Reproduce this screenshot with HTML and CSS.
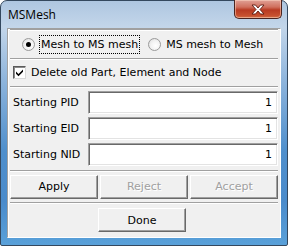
FILE: index.html
```html
<!DOCTYPE html>
<html>
<head>
<meta charset="utf-8">
<link rel="stylesheet" href="styles.css">
</head>
<body>
<div class="window">
  <div class="titlebar">
    <span class="title">MSMesh</span>
    <div class="close">
      <svg width="14" height="11" viewBox="0 0 14 11"><path d="M1 1 H4.5 L7 4 L9.5 1 H13 L9 5.5 L13 10 H9.5 L7 7 L4.5 10 H1 L5 5.5 Z" fill="#fff" stroke="#5a1a10" stroke-width="0.9" stroke-linejoin="round"/></svg>
    </div>
  </div>
  <div class="client">
    <div class="section radios">
      <label class="radio-item">
        <span class="radio checked"></span>
        <span class="focus">Mesh to MS mesh</span>
      </label>
      <label class="radio-item">
        <span class="radio"></span>
        <span class="plain">MS mesh to Mesh</span>
      </label>
    </div>
    <div class="section check-row">
      <span class="checkbox">
        <svg width="9" height="9" viewBox="0 0 9 9"><path d="M1 3.5 L3.5 6 L8 1.5 V3.8 L3.5 8.3 L1 5.8 Z" fill="#000"/></svg>
      </span>
      <span>Delete old Part, Element and Node</span>
    </div>
    <div class="section fields">
      <div class="field"><span class="flabel">Starting PID</span><div class="input">1</div></div>
      <div class="field"><span class="flabel">Starting EID</span><div class="input">1</div></div>
      <div class="field"><span class="flabel">Starting NID</span><div class="input">1</div></div>
    </div>
    <div class="section buttons">
      <div class="btn">Apply</div>
      <div class="btn disabled">Reject</div>
      <div class="btn disabled">Accept</div>
    </div>
    <div class="section done-row">
      <div class="btn">Done</div>
    </div>
  </div>
</div>
</body>
</html>
```
FILE: styles.css
```css
html, body {
  margin: 0;
  padding: 0;
  background: #ffffff;
}
.window {
  box-sizing: border-box;
  width: 288px;
  height: 246px;
  border: 1px solid #34485e;
  border-radius: 7px 7px 2px 2px;
  background:
    linear-gradient(to bottom, #aec6e0 0px, #c3d6ea 26px, #8db4dc 80px, #4f8fcc 150px, #4a8bcb 200px, #5aa2da 246px);
  display: flex;
  flex-direction: column;
  padding: 0 6px 7px 6px;
  font-family: "DejaVu Sans", sans-serif;
  font-size: 11px;
  color: #000;
}
.titlebar {
  height: 27px;
  display: flex;
  justify-content: space-between;
  align-items: flex-start;
  margin: 0 -1px 0 0;
}
.title {
  font-family: "Open Sans", "Liberation Sans", sans-serif;
  font-size: 12px;
  margin: 6px 0 0 1px;
  color: #000;
  line-height: 16px;
}
.close {
  width: 46px;
  height: 18px;
  margin-top: -1px;
  border: 1px solid #4a2420;
  border-top: none;
  border-radius: 0 0 5px 5px;
  background: linear-gradient(to bottom, #e0a196 0px, #d0705e 7px, #b83a22 10px, #c85230 16px, #d88a60 19px);
  box-shadow: inset 0 0 0 1px rgba(255,220,200,0.5);
  display: flex;
  align-items: center;
  justify-content: center;
}
.client {
  flex: 1;
  background: #f0f0f0;
  border: 1px solid #a0a0a0;
  border-right-color: #fff;
  border-bottom-color: #fff;
  box-shadow: inset 1px 1px 0 #fff;
  display: flex;
  flex-direction: column;
  padding: 0 1px;
}
.section {
  border-top: 1px solid #a0a0a0;
  box-shadow: inset 0 1px 0 #fff;
  margin: 0 1px;
}
.radios {
  height: 28px;
  display: flex;
  align-items: center;
  padding-left: 12px;
  gap: 9px;
}
.radio-item {
  display: flex;
  align-items: center;
}
.radio {
  box-sizing: border-box;
  width: 13px;
  height: 13px;
  border-radius: 50%;
  border: 1px solid #9a9a9a;
  background: radial-gradient(circle at 60% 60%, #fff 0, #f2f2f2 50%, #d8d8d8 100%);
  display: flex;
  align-items: center;
  justify-content: center;
  margin-right: 4px;
}
.radio.checked::after {
  content: "";
  width: 5px;
  height: 5px;
  border-radius: 50%;
  background: #000;
}
.focus {
  outline: 1px dotted #000;
  padding: 2px 1px 2px 1px;
  margin-left: 1px;
}
.plain {
  padding: 2px 1px;
}
.check-row {
  height: 27px;
  display: flex;
  align-items: center;
  padding-left: 3px;
  gap: 5px;
}
.checkbox {
  box-sizing: border-box;
  width: 13px;
  height: 13px;
  border: 1px solid #5a5a5a;
  border-right-color: #d8d8d8;
  border-bottom-color: #d8d8d8;
  box-shadow: inset 1px 1px 0 #8a8a8a;
  background: #fff;
  display: flex;
  align-items: center;
  justify-content: center;
}
.fields {
  height: 84px;
  display: flex;
  flex-direction: column;
  padding-top: 4px;
  gap: 3px;
  box-sizing: border-box;
}
.field {
  display: flex;
  align-items: center;
  height: 23px;
}
.flabel {
  width: 76px;
  padding-left: 3px;
}
.input {
  box-sizing: border-box;
  width: 191px;
  height: 23px;
  background: #fff;
  border: 1px solid #a0a0a0;
  border-right-color: #fff;
  border-bottom-color: #fff;
  box-shadow: inset 1px 1px 0 #696969, inset -1px -1px 0 #e3e3e3;
  text-align: right;
  padding: 4px 5px 0 0;
  line-height: 14px;
}
.buttons {
  height: 31px;
  display: flex;
  align-items: center;
  gap: 2px;
}
.btn {
  box-sizing: border-box;
  width: 88px;
  height: 24px;
  background: #f0f0f0;
  border: 1px solid #fff;
  border-right-color: #696969;
  border-bottom-color: #696969;
  box-shadow: inset -1px -1px 0 #a0a0a0;
  display: flex;
  align-items: center;
  justify-content: center;
}
.btn.disabled {
  color: #a0a0a0;
  text-shadow: 1px 1px 0 #fff;
}
.done-row {
  flex: 1;
  display: flex;
  align-items: center;
  justify-content: center;
  padding-right: 4px;
}
```
